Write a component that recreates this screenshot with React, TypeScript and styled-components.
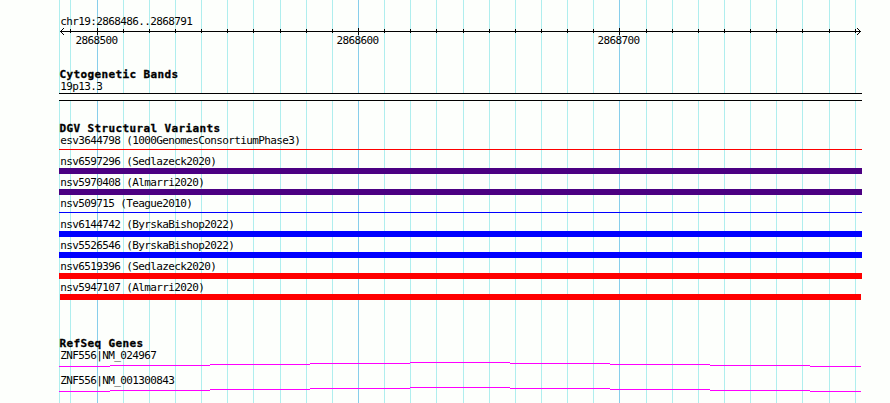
import styled, { createGlobalStyle } from "styled-components";

const GlobalStyle = createGlobalStyle`
  body {
    margin: 0;
    background-color: #fdfffc;
  }
`;

const Wrapper = styled.div`
  position: relative;
  width: 890px;
  height: 403px;
  overflow: hidden;
  background-color: #fdfffc;
`;

// sits behind every track
const GridLines = styled.svg`
  position: absolute;
  top: 0;
  left: 0;
  display: block;
`;

const Tracks = styled.div`
  position: relative;
  display: flex;
  flex-direction: column;
  width: 803px;
  padding: 15px 0 0 59px;
`;

const Label = styled.div`
  height: 13px;
  padding-left: 1.2px;
  font-family: "DejaVu Sans Mono", monospace;
  font-size: 11px;
  line-height: 13px;
  letter-spacing: -0.623px;
  white-space: pre;
  color: #000;
`;

const Title = styled.div`
  height: 12px;
  padding-left: 0.4px;
  font-family: "DejaVu Sans Mono", monospace;
  font-size: 11px;
  font-weight: bold;
  line-height: 13px;
  letter-spacing: 0.377px;
  white-space: pre;
  color: #000;
  -webkit-text-stroke: 0.3px #000;
`;

const Section = styled.section<{ $gap: number }>`
  display: flex;
  flex-direction: column;
  margin-top: ${(props) => props.$gap}px;
`;

const Axis = styled.svg`
  display: block;
`;

const AxisLabels = styled.div`
  display: flex;
  gap: 218px;
  margin-top: -1px;
  padding-left: 16.5px;
`;

const AxisLabel = styled(Label)`
  width: 43px;
  padding: 0;
`;

const Band = styled.div`
  height: 6px;
  border-top: 1px solid #000;
  border-bottom: 1px solid #000;
  background-color: #fdfffc;
`;

const VariantRow = styled.div`
  display: flex;
  flex-direction: column;
  height: 21px;
`;

const Bar = styled.div<{ $color: string; $thin?: boolean; $inset?: boolean }>`
  height: ${(props) => (props.$thin ? 1 : 6)}px;
  margin: ${(props) => (props.$thin ? 2 : 0)}px ${(props) => (props.$inset ? 1 : 0)}px 0;
  background-color: ${(props) => props.$color};
`;

const GeneRow = styled.div`
  height: 25px;
`;

const GeneLine = styled.svg`
  display: block;
`;

const lines = [
  59, 70, 97, 123, 149, 175, 201, 227, 253, 280, 306, 332, 358, 384, 410, 436,
  463, 489, 515, 541, 567, 593, 619, 646, 672, 698, 724, 750, 776, 802, 829, 855,
];
const majors = [97, 358, 619];
const positions = ["2868500", "2868600", "2868700"];

interface IVariant {
  name: string;
  color: string;
  thin?: boolean;
  inset?: boolean;
}

const variants: IVariant[] = [
  { name: "esv3644798 (1000GenomesConsortiumPhase3)", color: "#ff0000", thin: true },
  { name: "nsv6597296 (Sedlazeck2020)", color: "#4b0082" },
  { name: "nsv5970408 (Almarri2020)", color: "#4b0082" },
  { name: "nsv509715 (Teague2010)", color: "#0000ff", thin: true },
  { name: "nsv6144742 (ByrskaBishop2022)", color: "#0000ff" },
  { name: "nsv5526546 (ByrskaBishop2022)", color: "#0000ff" },
  { name: "nsv6519396 (Sedlazeck2020)", color: "#ff0000" },
  { name: "nsv5947107 (Almarri2020)", color: "#ff0000", inset: true },
];

const genes = ["ZNF556|NM_024967", "ZNF556|NM_001300843"];

// x start, x end, y of each step in an intron line
const steps = [
  [0, 51, 4],
  [51, 151, 3],
  [151, 251, 2],
  [251, 351, 1],
  [351, 451, 0],
  [451, 551, 1],
  [551, 651, 2],
  [651, 751, 3],
  [751, 802, 4],
];

function Ruler() {
  return (
    <Axis width="803" height="7" shapeRendering="crispEdges">
      <rect x="1" y="3" width="801" height="1" />
      {lines.slice(1).map((x) =>
        majors.includes(x) ? (
          <rect key={x} x={x - 59} y="0" width="1" height="7" />
        ) : (
          <rect key={x} x={x - 59} y="1" width="1" height="4" />
        )
      )}
      {[1, 2, 3].map((d) => (
        <g key={d}>
          <rect x={1 + d} y={3 - d} width="1" height="1" />
          <rect x={1 + d} y={3 + d} width="1" height="1" />
          <rect x={801 - d} y={3 - d} width="1" height="1" />
          <rect x={801 - d} y={3 + d} width="1" height="1" />
        </g>
      ))}
    </Axis>
  );
}

function App() {
  return (
    <>
      <GlobalStyle />
      <Wrapper>
        <GridLines width="890" height="403" shapeRendering="crispEdges">
          {lines.map((x) => (
            <rect
              key={x}
              x={x}
              y="0"
              width="1"
              height="403"
              fill={majors.includes(x) ? "#87ceeb" : "#afeeee"}
            />
          ))}
        </GridLines>
        <Tracks>
          <Label>chr19:2868486..2868791</Label>
          <Ruler />
          <AxisLabels>
            {positions.map((pos) => (
              <AxisLabel key={pos}>{pos}</AxisLabel>
            ))}
          </AxisLabels>

          <Section $gap={21}>
            <Title>Cytogenetic Bands</Title>
            <Label>19p13.3</Label>
            <Band />
          </Section>

          <Section $gap={21}>
            <Title>DGV Structural Variants</Title>
            {variants.map((variant) => (
              <VariantRow key={variant.name}>
                <Label>{variant.name}</Label>
                <Bar
                  $color={variant.color}
                  $thin={variant.thin}
                  $inset={variant.inset}
                />
              </VariantRow>
            ))}
          </Section>

          <Section $gap={35}>
            <Title>RefSeq Genes</Title>
            {genes.map((gene) => (
              <GeneRow key={gene}>
                <Label>{gene}</Label>
                <GeneLine width="803" height="5" shapeRendering="crispEdges">
                  {steps.map(([from, to, y]) => (
                    <rect key={from} x={from} y={y} width={to - from} height="1" fill="#ff00ff" />
                  ))}
                </GeneLine>
              </GeneRow>
            ))}
          </Section>
        </Tracks>
      </Wrapper>
    </>
  );
}

export default App;
